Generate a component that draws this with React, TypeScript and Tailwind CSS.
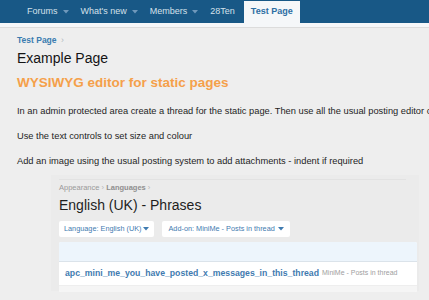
import React from "react";

const Caret = ({ color = "#8fb3d1", ml = "ml-[6px]" }: { color?: string; ml?: string }) => (
  <svg width="6" height="4" viewBox="0 0 6 4" className={`inline-block ${ml} align-middle`}>
    <path d="M0 0 L6 0 L3 3.5 Z" fill={color} />
  </svg>
);

export default function App() {
  return (
    <div className="w-[429px] h-[300px] overflow-hidden bg-[#eeeeee]" style={{ fontFamily: '"Liberation Sans", Arial, sans-serif' }}>
      {/* Nav */}
      <div className="h-[23px] bg-[#185886] flex items-end pl-[21px]">
        <div className="flex items-center h-[23px] px-[6px] text-[9px] text-[#d4e0ea]">Forums<Caret color="#6f98bb" ml="ml-[5px]" /></div>
        <div className="flex items-center h-[23px] px-[6px] text-[9px] text-[#d4e0ea]">What's new<Caret color="#6f98bb" ml="ml-[5px]" /></div>
        <div className="flex items-center h-[23px] px-[6px] text-[9px] text-[#d4e0ea]">Members<Caret color="#6f98bb" ml="ml-[5px]" /></div>
        <div className="flex items-center h-[23px] px-[6px] text-[9px] text-[#d4e0ea]">28Ten</div>
        <div className="flex items-center h-[22px] ml-[3px] px-[7px] bg-[#f5f7f9] text-[9px] font-bold text-[#2c6ea3]">Test Page</div>
      </div>
      <div className="h-[5px] bg-[#f5f7f9] border-b border-[#dcdcdc]"></div>

      <div className="px-[17px]">
        <div className="mt-[6px] text-[8.5px] font-bold text-[#3a7cb0] leading-[12px]">
          Test Page <span className="text-[#b0b8c0] font-normal ml-[2px]">›</span>
        </div>
        <div className="mt-[3px] text-[14px] text-[#141414] leading-[18px]">Example Page</div>
        <div className="mt-[7px] text-[13.5px] font-bold text-[#f5a04a] leading-[18px]">WYSIWYG editor for static pages</div>

        <div className="mt-[13px] text-[9.3px] text-[#1e1e1e] leading-[12px] whitespace-nowrap">
          In an admin protected area create a thread for the static page. Then use all the usual posting editor controls
        </div>
        <div className="mt-[13px] text-[9.3px] text-[#1e1e1e] leading-[12px] whitespace-nowrap">Use the text controls to set size and colour</div>
        <div className="mt-[13px] text-[9.3px] text-[#1e1e1e] leading-[12px] whitespace-nowrap">
          Add an image using the usual posting system to add attachments - indent if required
        </div>
      </div>

      {/* Embedded image */}
      <div className="ml-[51px] mt-[8px] w-[368px] h-[116px] bg-[#ebebeb] pt-[4px] px-[8px] pb-[6px]">
        <div className="border-t border-[#e2e2e2] w-[347px]"></div>
        <div className="mt-[3px] text-[7.5px] text-[#9a9a9a] leading-[10px]">
          Appearance <span className="text-[#b5b5b5]">›</span> <span className="font-bold text-[#8f8f8f]">Languages</span> <span className="text-[#b5b5b5]">›</span>
        </div>
        <div className="mt-[4px] text-[14px] text-[#1e1e1e] leading-[17px]">English (UK) - Phrases</div>
        <div className="mt-[7px] flex gap-[8px]">
          <div className="h-[16px] px-[5px] bg-white rounded-[2px] flex items-center text-[7.3px] text-[#3f7bb0]">
            Language: English (UK)<Caret color="#3f7bb0" ml="ml-[2px]" />
          </div>
          <div className="h-[16px] px-[6px] bg-white rounded-[2px] flex items-center text-[7.3px] text-[#3f7bb0]">
            Add-on: MiniMe - Posts in thread<Caret color="#3f7bb0" ml="ml-[3px]" />
          </div>
        </div>
        <div className="mt-[5px] w-[358px] bg-white rounded-[2px] overflow-hidden">
          <div className="h-[20px] bg-[#edf5fc] border-b border-[#dbe3ea]"></div>
          <div className="h-[24px] flex items-center px-[6px] border-b border-[#eeeeee] whitespace-nowrap">
            <span className="text-[8.7px] font-bold text-[#3f7bb0]">apc_mini_me_you_have_posted_x_messages_in_this_thread</span>
            <span className="ml-[3px] text-[7px] text-[#a0a0a0]">MiniMe - Posts in thread</span>
          </div>
          <div className="h-[6px] bg-[#f5f5f5]"></div>
        </div>
      </div>
    </div>
  );
}
